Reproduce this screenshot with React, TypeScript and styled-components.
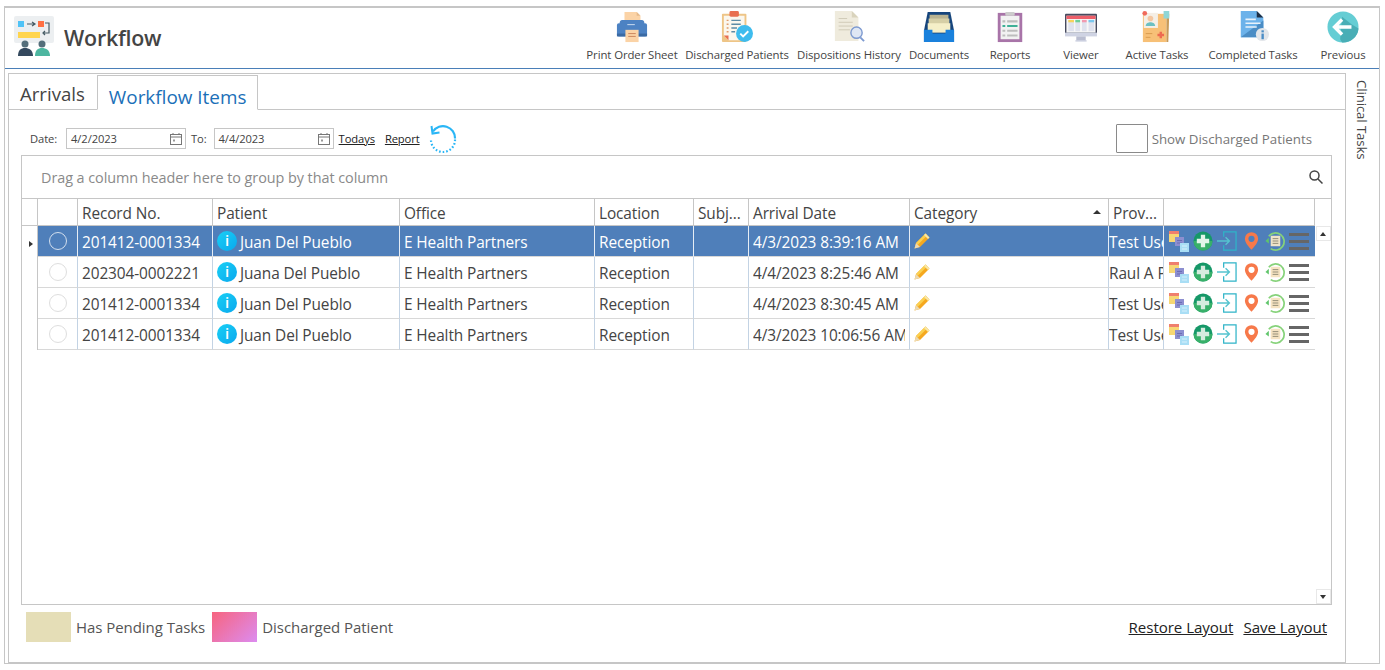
import React from "react";
import styled, { createGlobalStyle } from "styled-components";

const Global = createGlobalStyle`
  html, body { margin: 0; padding: 0; background: #fff; }
  body { font-family: "Open Sans", "Noto Sans", sans-serif; color: #444; }
  * { box-sizing: border-box; }
`;
const Page = styled.div`
  width: 1385px; height: 670px; padding: 6px 5px 0 4px; overflow: hidden; background: #fff;
`;
const Frame = styled.div`
  width: 1376px; height: 658px; border: 1px solid #c6c6c6; border-top-width: 2px; display: flex; flex-direction: column;
`;
const Header = styled.header`
  height: 61px; flex: none; display: flex; align-items: flex-start; border-bottom: 1px solid #4a7fb8;
`;
const Brand = styled.div`
  display: flex; align-items: center; gap: 10px; padding: 8px 0 0 9px;
`;
const Title = styled.h1`
  margin: 2px 0 0; font-size: 21.4px; font-weight: 600; color: #444; letter-spacing: -.2px;
`;
const Toolbar = styled.nav`
  margin-left: auto; margin-right: -3px; display: flex;
`;
const ToolItem = styled.div<{ $w: number }>`
  width: ${p => p.$w}px; display: flex; flex-direction: column; align-items: center; padding-top: 3px;
  svg { display: block; width: 32px; height: 32px; }
`;
const ToolLabel = styled.span`
  font-size: 11.4px; line-height: 14px; margin-top: 5px; white-space: nowrap; color: #444; letter-spacing: -.1px;
`;
const Body = styled.div`
  flex: 1; display: flex; padding: 4px 0 0 3px; min-height: 0;
`;
const Main = styled.main`
  width: 1338px; height: 590px; border: 1px solid #c6c6c6; display: flex; flex-direction: column; flex: none;
`;
const Side = styled.aside`
  flex: 1; display: flex; justify-content: center; padding-top: 7px; padding-right: 1px;
`;
const SideText = styled.span`
  writing-mode: vertical-rl; font-size: 13.2px; color: #444; height: max-content; letter-spacing: -.1px;
`;
const Tabs = styled.div`
  height: 36px; flex: none; display: flex; align-items: flex-end; border-bottom: 1px solid #c6c6c6; padding-left: 3px;
`;
const Tab = styled.div<{ $active?: boolean }>`
  height: ${p => p.$active ? 35 : 34}px; margin-bottom: ${p => p.$active ? -1 : 0}px; background: #fff;
  font-size: ${p => p.$active ? 18.9 : 18.6}px; line-height: ${p => p.$active ? 43 : 37}px; white-space: nowrap;
  color: ${p => p.$active ? "#1b6fb8" : "#444"};
  padding: 0 11px 0 ${p => p.$active ? 11 : 8}px;
  margin-left: ${p => p.$active ? 1 : 0}px;
  border: ${p => p.$active ? "1px solid #c6c6c6" : "none"};
  border-bottom: ${p => p.$active ? "1px solid #fff" : "none"};
`;
const Content = styled.div`
  flex: 1; display: flex; flex-direction: column; padding: 0 13px 0 12px; min-height: 0;
`;
const Filter = styled.div`
  height: 45px; flex: none; display: flex; align-items: center; font-size: 11.2px; padding: 12px 20px 0 9px; color: #444;
`;
const FilterLabel = styled.span<{ $gap: number }>`
  margin-right: ${p => p.$gap}px; letter-spacing: -.1px;
`;
const DateBox = styled.div`
  width: 120px; height: 21px; border: 1px solid #c6c6c6; display: flex; align-items: center; justify-content: space-between;
  padding: 0 2px 0 4px; margin-right: 5px; letter-spacing: -.1px;
  svg { width: 14px; height: 14px; }
`;
const TextLink = styled.a`
  color: #222; text-decoration: underline; margin-right: 10px; letter-spacing: -.1px;
`;
const Refresh = styled.svg`
  width: 28px; height: 28px; margin-left: -1px;
`;
const CheckWrap = styled.label`
  margin-left: auto; display: flex; align-items: center; gap: 4px; font-size: 13.3px; color: #777;
`;
const CheckBox = styled.span`
  width: 32px; height: 29px; border: 1px solid #8a8a8a; border-radius: 1px; display: block;
`;
const Grid = styled.section`
  height: 450px; flex: none; border: 1px solid #c6c6c6; display: flex; flex-direction: column;
`;
const GroupBar = styled.div`
  height: 43px; flex: none; display: flex; align-items: center; justify-content: space-between; padding: 0 7px 0 19px;
  border-bottom: 1px solid #c6c6c6; color: #8a8a8a; font-size: 14.4px; letter-spacing: -.05px;
`;
const GridBody = styled.div`
  flex: 1; display: flex; min-height: 0;
`;
const TableWrap = styled.div`
  width: 1293px; flex: none;
`;
const Table = styled.table`
  border-collapse: separate; border-spacing: 0; table-layout: fixed; width: 1293px; font-size: 15.4px; letter-spacing: -.1px;
`;
const Th = styled.th`
  height: 27px; padding: 2px 0 0 4px; text-align: left; font-weight: 400; color: #444; white-space: nowrap; overflow: hidden;
  border-right: 1px solid #c6c6c6; border-bottom: 1px solid #c6c6c6; position: relative;
`;
const SortMark = styled.span`
  position: absolute; right: 7px; top: 11px; width: 0; height: 0;
  border-left: 4px solid transparent; border-right: 4px solid transparent; border-bottom: 4px solid #333;
`;
const Td = styled.td<{ $sel?: boolean; $flush?: boolean }>`
  height: 31px; padding: 2px 0 0 ${p => p.$flush ? 0 : 4}px; white-space: nowrap; overflow: hidden;
  max-width: 0;
  color: ${p => p.$sel ? "#fff" : "#444"};
  background: ${p => p.$sel ? "#4f7fba" : "#fff"};
  border-right: 1px solid ${p => p.$sel ? "#e6edf5" : "#c3d3e4"};
  border-bottom: 1px solid #d8d8d8;
`;
const DateClip = styled.div`
  width: 152px; overflow: hidden;
`;
const IndicatorCell = styled.td`
  padding: 0; border-right: 1px solid #c6c6c6; text-align: center; background: #fff; vertical-align: middle;
`;
const Arrow = styled.span`
  display: inline-block; width: 0; height: 0; margin-left: 2px;
  border-top: 3.5px solid transparent; border-bottom: 3.5px solid transparent; border-left: 4px solid #333;
`;
const CircleCell = styled(Td)`
  padding: 0; text-align: center;
`;
const Radio = styled.span<{ $sel?: boolean }>`
  display: block; width: 18px; height: 18px; margin: 0 auto 1px; border-radius: 50%;
  border: 1px solid ${p => p.$sel ? "#d3dfee" : "#dedede"}; background: transparent;
`;
const PatientWrap = styled.div`
  display: flex; align-items: center; gap: 3px; overflow: hidden; margin-top: -1px;
`;
const PatientName = styled.span`
  padding-top: 1px;
`;
const InfoBadge = styled.span`
  flex: none; width: 20px; height: 20px; border-radius: 50%; background: linear-gradient(135deg, #19d0f5, #0aa8ee);
  color: #fff; font-weight: 600; font-size: 15px; line-height: 19px; text-align: center; margin-bottom: 1px;
`;
const ActionCell = styled.td<{ $sel?: boolean }>`
  padding: 0 0 0 4px; background: ${p => p.$sel ? "#4f7fba" : "#fff"}; border-bottom: 1px solid #d8d8d8;
`;
const Actions = styled.div`
  display: flex; align-items: center; height: 30px;
  svg { flex: none; display: block; }
`;
const ActionSlot = styled.span<{ $gap: number }>`
  display: block; flex: none; margin-left: ${p => p.$gap}px;
`;
const Pencil = styled.svg`
  display: block; width: 16px; height: 16px; margin-top: -2px; margin-bottom: 1px;
`;
const ScrollBar = styled.div`
  flex: 1; display: flex; flex-direction: column; justify-content: space-between; align-items: center; padding: 27px 0 0;
`;
const ScrollBtn = styled.div<{ $down?: boolean }>`
  width: 15px; height: 15px; border: 1px solid #e8e8e8; display: flex; align-items: center; justify-content: center;
  &::after { content: ""; width: 0; height: 0; border-left: 3.5px solid transparent; border-right: 3.5px solid transparent;
    ${p => p.$down ? "border-top: 4px solid #333;" : "border-bottom: 4px solid #333;"} }
`;
const Footer = styled.footer`
  display: flex; align-items: center; height: 47px; padding: 0 5px 4px 5px; font-size: 15px; color: #555; letter-spacing: -.05px;
`;
const Swatch = styled.span<{ $bg: string }>`
  width: 45px; height: 30px; background: ${p => p.$bg}; flex: none; margin-right: 5px;
`;
const LegendText = styled.span`
  margin-right: 7px;
`;
const FooterLinks = styled.div`
  margin-left: auto; display: flex; gap: 10px; color: #222; font-size: 15.1px;
  a { text-decoration: underline; color: #222; }
`;

const icons: Record<string, React.ReactNode> = {
  print: <svg viewBox="0 0 34 34"><path d="M9 1h13l4 4v10H9z" fill="#fbd3a6"/><path d="M22 1l4 4h-4z" fill="#e5b98a"/><path d="M4 12c0-1.500 1-2.500 2.500-2.500h21C29 9.500 30 10.500 30 12v12H4z" fill="#4c82c3"/><rect x="1" y="13" width="32" height="14" rx="2" fill="#4c82c3"/><rect x="1" y="24" width="32" height="3" fill="#3a6aa3"/><rect x="12" y="14" width="8" height="1" fill="#cfe0f2"/><path d="M10 20h14v13H10z" fill="#fbd3a6"/><path d="M13 24h8M13 27h8" stroke="#c9825a"/></svg>,
  discharged: <svg viewBox="0 0 34 34"><rect x="1" y="3" width="26" height="30" rx="1" fill="#eec587"/><path d="M3 5h22v26H8l-5-5z" fill="#fbf7ee"/><path d="M3 26l5 0v5z" fill="#e86f50"/><rect x="9" y="0" width="10" height="6" rx="1.500" fill="#e86f50"/><path d="M6 10h2M6 14h2M6 18h2M6 22h2" stroke="#e09b6d" strokeWidth="1.500"/><path d="M11 10h10M11 14h10M11 18h6M11 22h4" stroke="#5c8ba6" strokeWidth="1.500"/><circle cx="25" cy="24" r="9" fill="#3ebcee"/><path d="M20.500 24l3 3 5.500-5.500" stroke="#fff" strokeWidth="2" fill="none"/></svg>,
  history: <svg viewBox="0 0 34 34"><path d="M2 0h18l7 7v25H2z" fill="#efebdd"/><path d="M20 0l7 7h-7z" fill="#d9d3bc"/><path d="M6 8h9M6 12h15M6 16h15M6 20h12" stroke="#cfc9b5"/><circle cx="25" cy="23" r="6" fill="#dfe7f4" stroke="#7d9ad0" strokeWidth="1.500"/><path d="M29 28l4 4" stroke="#7d9ad0" strokeWidth="2"/></svg>,
  documents: <svg viewBox="0 0 34 34"><path d="M5 1h24l4 20v12H1V21z" fill="#16457c"/><rect x="7" y="4" width="20" height="9" fill="#b9b391"/><rect x="6" y="8" width="22" height="9" fill="#d6cfa6"/><rect x="5" y="13" width="24" height="10" fill="#f5efc8"/><path d="M1 20h9v3c0 1 1 1 1 1h12s1 0 1-1v-3h9v13H1z" fill="#1a81dc"/></svg>,
  reports: <svg viewBox="0 0 34 34"><rect x="4" y="2" width="26" height="31" fill="#a874a8"/><rect x="7" y="5" width="20" height="25" fill="#f2f2f2"/><rect x="12" y="1" width="10" height="4" rx="1" fill="#ccc"/><path d="M9 11h3M14 11h11M9 21h3M14 21h11M9 26h3M14 26h11" stroke="#bdbdbd" strokeWidth="2.200"/><path d="M9 16h3M14 16h11" stroke="#3fb097" strokeWidth="2.200"/></svg>,
  viewer: <svg viewBox="0 0 34 34"><rect x="0" y="3" width="34" height="22" rx="1" fill="#474b5f"/><rect x="1.500" y="5" width="31" height="18" fill="#f7f7f7"/><rect x="1.500" y="5" width="31" height="3.500" fill="#ee5f6a"/><rect x="3.500" y="9.500" width="6" height="12" fill="#dfe2ee"/><rect x="3.500" y="9.500" width="6" height="2.500" fill="#f7d35b"/><rect x="11" y="9.500" width="5" height="12" fill="#dfe2ee"/><rect x="11" y="9.500" width="5" height="2.500" fill="#6fcf97"/><rect x="18" y="9.500" width="5" height="12" fill="#dfe2ee"/><rect x="18" y="9.500" width="5" height="2.500" fill="#f29ab0"/><rect x="25" y="9.500" width="6" height="12" fill="#dfe2ee"/><rect x="25" y="9.500" width="6" height="2.500" fill="#7ac7ee"/><rect x="0" y="23" width="34" height="4" fill="#cfd3e3"/><rect x="12" y="27" width="10" height="5" fill="#b9bdd0"/><rect x="11" y="31" width="12" height="1.500" fill="#cfd3e3"/></svg>,
  active: <svg viewBox="0 0 34 34"><path d="M2 3h25v30H2z" fill="#f7c077"/><path d="M27 3h3l-1 30h-2z" fill="#c89a58"/><rect x="24" y="0" width="6" height="8" fill="#8fd6d6"/><rect x="3" y="2" width="15" height="16" fill="#f5efe6"/><circle cx="10" cy="8" r="3" fill="#f4c7a2"/><path d="M5 16c0-3 3-4 5-4s5 1 5 4z" fill="#6cc0c2"/><circle cx="4" cy="2.500" r="2.500" fill="#f06a5b"/><path d="M5 24h7M5 28h5" stroke="#d89a4e"/><path d="M21 22v7M17.500 25.500h7" stroke="#ee6a50" strokeWidth="2.600"/></svg>,
  completed: <svg viewBox="0 0 34 34"><path d="M4 0h17l7 7v21H4z" fill="#6cb2ea"/><path d="M4 28L28 10v18z" fill="#4b8dc5"/><path d="M21 0l7 7h-7z" fill="#1e2f45"/><path d="M9 9h11M9 13h16M9 17h12" stroke="#e8f2fb" strokeWidth="1.800"/><circle cx="27" cy="25" r="7" fill="#e3e6ea"/><rect x="26" y="24" width="2.500" height="6" fill="#4b8dc5"/><rect x="26" y="20.500" width="2.500" height="2.200" fill="#4b8dc5"/></svg>,
  previous: <svg viewBox="0 0 34 34"><circle cx="17" cy="17" r="16.500" fill="#65cdd4"/><path d="M26 14L16 6l-2 24 2 3.500a16.500 16.500 0 0 0 17.500-15z" fill="#49aeb6"/><path d="M16 9L8 17l8 8M8 17h18" stroke="#fff" strokeWidth="3.600" fill="none"/></svg>,
};

const tools = [
  { k: "print", l: "Print Order Sheet", w: 104 },
  { k: "discharged", l: "Discharged Patients", w: 106 },
  { k: "history", l: "Dispositions History", w: 118 },
  { k: "documents", l: "Documents", w: 62 },
  { k: "reports", l: "Reports", w: 80 },
  { k: "viewer", l: "Viewer", w: 62 },
  { k: "active", l: "Active Tasks", w: 90 },
  { k: "completed", l: "Completed Tasks", w: 102 },
  { k: "previous", l: "Previous", w: 78 },
];

const Logo = () => (
  <svg width="40" height="40" viewBox="0 0 40 40">
    <rect x="0" y="0" width="40" height="27" rx="2" fill="#eceff1"/>
    <rect x="4" y="5" width="6" height="6" fill="#4fc3f7"/>
    <rect x="24" y="5" width="6" height="6" fill="#ff7043"/>
    <path d="M13 8h7M18 6l3 2-3 2" stroke="#455a64" strokeWidth="1.200" fill="none"/>
    <path d="M31 7h4v10h-5M31 15l-2 2 2 2" stroke="#455a64" strokeWidth="1.200" fill="none"/>
    <rect x="4" y="16" width="22" height="6" fill="#ffd54f"/>
    <circle cx="11" cy="28" r="3.500" fill="#546e7a"/>
    <path d="M4 40c0-6 3-8 7-8s8 2 8 8z" fill="#34495e"/>
    <circle cx="28" cy="28" r="3.500" fill="#546e7a"/>
    <path d="M21 40c0-6 3-8 7-8s8 2 8 8z" fill="#4db6a0"/>
  </svg>
);

const Cal = () => (
  <svg viewBox="0 0 14 14" fill="none" stroke="#777"><rect x="1.500" y="2.500" width="11" height="10"/><path d="M1.500 5h11M4 1v2M10 1v2"/><rect x="4" y="7.500" width="2" height="2" fill="#999" stroke="none"/></svg>
);

const RowActions = ({ sel }: { sel?: boolean }) => (
  <Actions>
    <ActionSlot $gap={1}>
      <svg width="20" height="21" viewBox="0 0 20 21">
        <rect x="0" y="0" width="10" height="11" fill="#f7d774"/><rect x="0" y="0" width="10" height="3" fill="#ef7f6e"/>
        <rect x="6" y="6" width="9" height="9" fill="#8d8fd0"/>
        <path d="M8 9.500h5M8 12h5" stroke="#6b6db5"/>
        <rect x="11" y="12" width="9" height="9" fill="#a9def5"/>
        <path d="M13 15h5M13 18h5" stroke="#d7f0fb"/>
      </svg>
    </ActionSlot>
    <ActionSlot $gap={4}>
      <svg width="20" height="20" viewBox="0 0 21 21">
        <circle cx="10.500" cy="10.500" r="10" fill="#169868"/><path d="M.5 10.500h20a10 10 0 0 1-20 0z" fill="#38b06a"/>
        <path d="M10.500 4v13M4 10.500h13" stroke={sel ? "#e2f5ea" : "#d6ecdf"} strokeWidth="4.500"/>
      </svg>
    </ActionSlot>
    <ActionSlot $gap={4}>
      <svg width="20" height="20" viewBox="0 0 21 21" fill="none">
        <path d="M7 6V1h13v19H7v-5" stroke="#2fb4c8" strokeWidth="1.300"/>
        <path d="M0 10.500h13M9 6.500l4 4-4 4" stroke="#55c4cf" strokeWidth="1.500"/>
      </svg>
    </ActionSlot>
    <ActionSlot $gap={7}>
      <svg width="15" height="20" viewBox="0 0 17 21">
        <path d="M8.500 0.500a7.500 7.500 0 0 1 7.500 7.500c0 4-4 9-7.500 12.500C5 17 1 12 1 8a7.500 7.500 0 0 1 7.500-7.500z" fill="#f7794a"/>
        <circle cx="8.500" cy="8" r="3.500" fill={sel ? "#4f7fba" : "#fff"}/>
      </svg>
    </ActionSlot>
    <ActionSlot $gap={6}>
      <svg width="20" height="20" viewBox="0 0 21 21" fill="none">
        <path d="M4 5.500a9 9 0 1 1 2 13" stroke="#86d27a" strokeWidth="1.800"/>
        <path d="M0.500 10.500l3.500-3.500v6z" fill="#5fc56a"/>
        <rect x="6" y="5" width="10" height="11" fill={sel ? "#efe3c8" : "#f6e3c2"}/>
        <path d="M8 8h6M8 10.500h6M8 13h6" stroke="#8f8a75"/>
      </svg>
    </ActionSlot>
    <ActionSlot $gap={4}>
      <svg width="20" height="18" viewBox="0 0 20 18">
        <rect x="0" y="1" width="20" height="3" fill="#666"/><rect x="0" y="8" width="20" height="3" fill="#666"/><rect x="0" y="15" width="20" height="3" fill="#666"/>
      </svg>
    </ActionSlot>
  </Actions>
);

const rows = [
  { rec: "201412-0001334", pat: "Juan Del Pueblo", date: "4/3/2023 8:39:16 AM", prov: "Test User", sel: true },
  { rec: "202304-0002221", pat: "Juana Del Pueblo", date: "4/4/2023 8:25:46 AM", prov: "Raul A Perez" },
  { rec: "201412-0001334", pat: "Juan Del Pueblo", date: "4/4/2023 8:30:45 AM", prov: "Test User" },
  { rec: "201412-0001334", pat: "Juan Del Pueblo", date: "4/3/2023 10:06:56 AM", prov: "Test User" },
];
const cols = [16, 40, 135, 187, 195, 99, 55, 161, 199, 55, 151];

export default function App() {
  return (
    <Page>
      <Global />
      <Frame>
        <Header>
          <Brand><Logo /><Title>Workflow</Title></Brand>
          <Toolbar>
            {tools.map(t => (
              <ToolItem key={t.k} $w={t.w}>{icons[t.k]}<ToolLabel>{t.l}</ToolLabel></ToolItem>
            ))}
          </Toolbar>
        </Header>
        <Body>
          <Main>
            <Tabs><Tab>Arrivals</Tab><Tab $active>Workflow Items</Tab></Tabs>
            <Content>
              <Filter>
                <FilterLabel $gap={9}>Date:</FilterLabel>
                <DateBox>4/2/2023<Cal /></DateBox>
                <FilterLabel $gap={7}>To:</FilterLabel>
                <DateBox>4/4/2023<Cal /></DateBox>
                <TextLink>Todays</TextLink>
                <TextLink>Report</TextLink>
                <Refresh viewBox="0 0 28 28" fill="none">
                  <path d="M4 6.500a12 12 0 0 1 22 7" stroke="#29b6f6" strokeWidth="2.200"/>
                  <path d="M26 14.500a12 12 0 0 1-24 1" stroke="#29b6f6" strokeWidth="2.200" strokeDasharray="1.600 2"/>
                  <path d="M2.500 1l1 7.500 7-1" stroke="#29b6f6" strokeWidth="2"/>
                </Refresh>
                <CheckWrap><CheckBox />Show Discharged Patients</CheckWrap>
              </Filter>
              <Grid>
                <GroupBar>
                  <span>Drag a column header here to group by that column</span>
                  <svg width="16" height="16" viewBox="0 0 16 16" fill="none" stroke="#444" strokeWidth="1.500"><circle cx="6.500" cy="6.500" r="4.500"/><path d="M10 10l4.500 4.500"/></svg>
                </GroupBar>
                <GridBody>
                  <TableWrap>
                    <Table>
                      <colgroup>{cols.map((c, i) => <col key={i} style={{ width: c }} />)}</colgroup>
                      <thead>
                        <tr>
                          <Th /><Th /><Th>Record No.</Th><Th>Patient</Th><Th>Office</Th><Th>Location</Th><Th>Subj...</Th><Th>Arrival Date</Th><Th>Category<SortMark /></Th><Th>Prov...</Th><Th />
                        </tr>
                      </thead>
                      <tbody>
                        {rows.map((r, i) => (
                          <tr key={i}>
                            <IndicatorCell>{r.sel && <Arrow />}</IndicatorCell>
                            <CircleCell $sel={r.sel}><Radio $sel={r.sel} /></CircleCell>
                            <Td $sel={r.sel}>{r.rec}</Td>
                            <Td $sel={r.sel}><PatientWrap><InfoBadge>i</InfoBadge><PatientName>{r.pat}</PatientName></PatientWrap></Td>
                            <Td $sel={r.sel}>E Health Partners</Td>
                            <Td $sel={r.sel}>Reception</Td>
                            <Td $sel={r.sel} />
                            <Td $sel={r.sel}><DateClip>{r.date}</DateClip></Td>
                            <Td $sel={r.sel}>
                              <Pencil viewBox="0 0 16 16">
                                <path d="M.5 15.500l1.500-5.500L11.500.5l4 4L6 14z" fill="#f5a81f"/>
                                <path d="M2 10L11.500.5l1.800 1.800L3.800 11.800z" fill="#fbd04f"/>
                                <path d="M.5 15.500l1.500-5.500 4 4z" fill="#ecd9b0"/>
                                <path d="M11.500.5l4 4-1.500 1.500-4-4z" fill="#f8e7a8"/>
                              </Pencil>
                            </Td>
                            <Td $sel={r.sel} $flush>{r.prov}</Td>
                            <ActionCell $sel={r.sel}><RowActions sel={r.sel} /></ActionCell>
                          </tr>
                        ))}
                      </tbody>
                    </Table>
                  </TableWrap>
                  <ScrollBar><ScrollBtn /><ScrollBtn $down /></ScrollBar>
                </GridBody>
              </Grid>
              <Footer>
                <Swatch $bg="#e5deb7" /><LegendText>Has Pending Tasks</LegendText>
                <Swatch $bg="linear-gradient(135deg, #f7647f, #dc8cf0)" /><LegendText>Discharged Patient</LegendText>
                <FooterLinks><a>Restore Layout</a><a>Save Layout</a></FooterLinks>
              </Footer>
            </Content>
          </Main>
          <Side><SideText>Clinical Tasks</SideText></Side>
        </Body>
      </Frame>
    </Page>
  );
}
